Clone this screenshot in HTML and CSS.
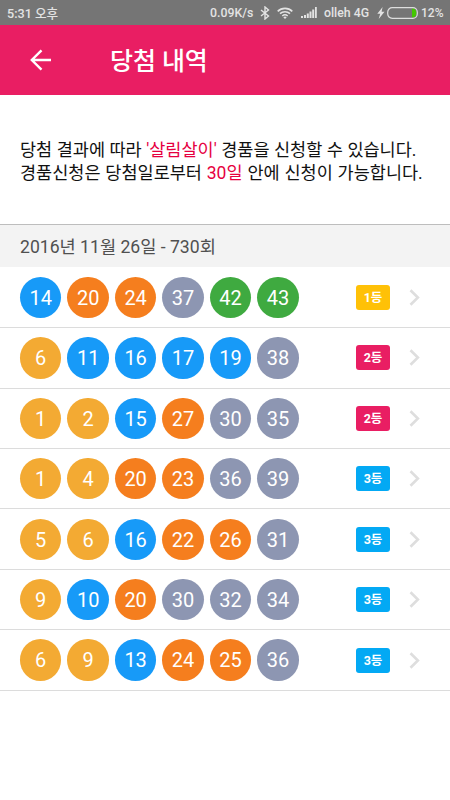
FILE: index.html
```html
<!DOCTYPE html>
<html lang="ko">
<head>
<meta charset="utf-8">
<title>당첨 내역</title>
<link rel="stylesheet" href="styles.css">
</head>
<body>
<div class="status">
  <span class="time">5:31 오후</span>
  <span class="speed">0.09K/s</span>
  <svg class="bt" width="10" height="14" viewBox="0 0 10 14"><path d="M1 4l7.500 6L5 13V1l3.500 3L1 10" fill="none" stroke="#e3e3e3" stroke-width="1.400"/></svg>
  <svg class="wifi" width="16" height="12" viewBox="0 0 16 12"><g fill="none" stroke="#e3e3e3" stroke-width="1.600"><path d="M.7 4.300a10.500 10.500 0 0 1 14.600 0"/><path d="M3 6.700a7.200 7.200 0 0 1 10 0"/><path d="M5.300 9a4 4 0 0 1 5.400 0"/></g><path d="M6.300 10.200q1.700-1.200 3.400 0L8 12z" fill="#e3e3e3"/></svg>
  <svg class="signal" width="16" height="11" viewBox="0 0 16 11"><path d="M0 9h2v2H0zM3 8h2v3H3zM5.800 6.500h2V11h-2zM8.500 4.500h2V11h-2zM11.200 2.500h2V11h-2zM14 0h1.800v11H14z" fill="#e3e3e3"/></svg>
  <span class="carrier">olleh 4G</span>
  <svg class="bolt" width="8" height="12" viewBox="0 0 8 12"><path d="M5.600 0L.3 6.800h2.900L1.700 12l5.800-7.200H4.600z" fill="#e3e3e3"/></svg>
  <svg class="battery" width="31" height="12" viewBox="0 0 31 12"><path d="M25 1.500h1.500q3 1.500 3 4.500t-3 4.500H25z" fill="#43c800"/><rect x=".7" y=".7" width="29.600" height="10.600" rx="4.500" fill="none" stroke="#dedede" stroke-width="1.200"/></svg>
  <span class="percent">12%</span>
</div>
<header class="bar">
  <svg class="back" width="22" height="22" viewBox="0 0 22 22"><path d="M21 11H2M11.500 1.300L1.800 11l9.700 9.700" fill="none" stroke="#fff" stroke-width="2.400"/></svg>
  <h1>당첨 내역</h1>
</header>
<section class="notice">
  <p class="line-one">당첨 결과에 따라 <em>'살림살이'</em> 경품을 신청할 수 있습니다.</p>
  <p class="line-two">경품신청은 당첨일로부터 <em>30일</em> 안에 신청이 가능합니다.</p>
</section>
<h2 class="date"><span>2016년 11월 26일 - 730회</span></h2>
<ul class="list" id="list"></ul>
<script src="app.js"></script>
</body>
</html>
```
FILE: styles.css
```css
* { box-sizing: border-box; margin: 0; padding: 0; }
body {
  width: 450px;
  height: 800px;
  overflow: hidden;
  background: #fff;
  color: #111;
  font-family: Roboto, "Noto Sans CJK KR", sans-serif;
}
.status {
  display: flex;
  align-items: center;
  height: 25px;
  padding: 0 7px 0 7px;
  background: #757575;
  color: #e3e3e3;
  font-size: 12.300px;
  font-weight: 500;
  line-height: 25px;
  white-space: nowrap;
}
.status span { padding-top: 1px; }
.time { font-size: 12.600px; }
.speed { margin-left: auto; width: 44px; }
.bt { margin-left: 6px; }
.wifi { margin-left: 7px; }
.signal { margin-left: 8px; }
.carrier { margin-left: 7px; width: 46px; }
.bolt { margin-left: 7px; }
.battery { margin-left: 2px; }
.percent { margin-left: 3px; width: 22px; font-size: 12px; }
.bar {
  display: flex;
  align-items: center;
  height: 70px;
  padding-left: 30px;
  background: #e91e63;
  color: #fff;
}
.bar h1 { margin-left: 58px; padding-top: 3px; font-size: 25px; font-weight: 500; line-height: 36px; letter-spacing: -.1px; }
.notice {
  height: 129px;
  padding-top: 44px;
  padding-left: 20px;
  font-size: 17.500px;
  line-height: 23px;
  white-space: nowrap;
}
.notice em { color: #e6003f; font-style: normal; }
.line-one { word-spacing: .15px; }
.line-two { word-spacing: .5px; }
.date {
  height: 43px;
  padding-left: 20px;
  border-top: 1px solid #bdbdbd;
  background: #f3f3f3;
  color: #505050;
  font-size: 17.600px;
  font-weight: 400;
  line-height: 44px;
}
.list { padding-top: .8px; list-style: none; }
.row {
  display: flex;
  align-items: center;
  height: 60.430px;
  padding: 0 30px 0 20px;
  border-bottom: 1px solid #dcdcdc;
}
.balls { display: flex; gap: 6.200px; }
.ball {
  width: 41.300px;
  height: 41.300px;
  border-radius: 50%;
  color: #fff;
  font-size: 20px;
  line-height: 43px;
  text-align: center;
}
.amber { background: #f3aa33; }
.blue { background: #179af8; }
.orange { background: #f57e1e; }
.gray { background: #8d96b2; }
.green { background: #3faa40; }
.rank {
  width: 34px;
  height: 25px;
  margin-left: auto;
  border-radius: 3px;
  color: #fff;
  font-size: 12.500px;
  font-weight: 700;
  line-height: 26px;
  text-align: center;
}
.rank-1 { background: #ffc107; }
.rank-2 { background: #e91e63; }
.rank-3 { background: #03a9f4; }
.chevron { margin-left: 19px; }
```
FILE: app.js
```js
const draws = [
  [1, [14, 20, 24, 37, 42, 43]],
  [2, [6, 11, 16, 17, 19, 38]],
  [2, [1, 2, 15, 27, 30, 35]],
  [3, [1, 4, 20, 23, 36, 39]],
  [3, [5, 6, 16, 22, 26, 31]],
  [3, [9, 10, 20, 30, 32, 34]],
  [3, [6, 9, 13, 24, 25, 36]]
];
const color = n => n < 10 ? 'amber' : n < 20 ? 'blue' : n < 30 ? 'orange' : n < 40 ? 'gray' : 'green';
document.getElementById('list').innerHTML = draws.map(([rank, balls]) => `
  <li class="row">
    <div class="balls">${balls.map(n => `<span class="ball ${color(n)}">${n}</span>`).join('')}</div>
    <span class="rank rank-${rank}">${rank}등</span>
    <svg class="chevron" width="11" height="17" viewBox="0 0 11 17"><path d="M1.500 1.200L8.900 8.500l-7.400 7.300" fill="none" stroke="#dedede" stroke-width="2.600"/></svg>
  </li>`).join('');
```
